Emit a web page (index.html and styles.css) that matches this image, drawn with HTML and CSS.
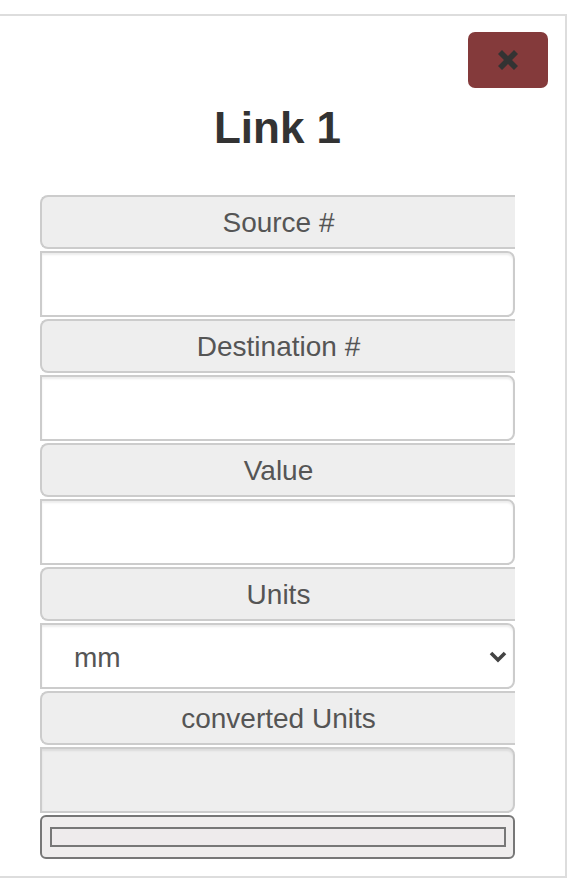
FILE: index.html
```html
<!DOCTYPE html>
<html>
<head>
<meta charset="utf-8">
<link rel="stylesheet" href="styles.css">
</head>
<body>
<div class="panel">
  <div class="panel-head">
    <button class="close-btn" type="button" aria-label="Close">
      <svg width="22" height="22" viewBox="0 0 22 22"><path d="M5 1 L11 7 L17 1 L21 5 L15 11 L21 17 L17 21 L11 15 L5 21 L1 17 L7 11 L1 5 Z" fill="#333"/></svg>
    </button>
  </div>
  <div class="content">
    <h1 class="title">Link 1</h1>
    <div class="fields">
      <div class="label">Source #</div>
      <input class="field" type="text">
      <div class="label">Destination #</div>
      <input class="field" type="text">
      <div class="label">Value</div>
      <input class="field" type="text">
      <div class="label">Units</div>
      <div class="select-wrap">
        <select class="field select"><option>mm</option></select>
        <svg class="chev" width="18" height="12" viewBox="0 0 18 12"><path d="M2 2 L9 9 L16 2" fill="none" stroke="#444" stroke-width="3.6"/></svg>
      </div>
      <div class="label">converted Units</div>
      <div class="field output"></div>
      <div class="footer-box"><div class="footer-inner"></div></div>
    </div>
  </div>
</div>
</body>
</html>
```

FILE: styles.css
```css
* { box-sizing: border-box; }
body {
  margin: 0;
  font-family: "Liberation Sans", Arial, Helvetica, sans-serif;
  background: #fff;
}
.panel {
  margin: 14px 0 0 -4px;
  width: 571px;
  border: 2px solid #ddd;
  padding-bottom: 17px;
}
.panel-head {
  display: flex;
  justify-content: flex-end;
  padding: 16px 17px 0 0;
}
.close-btn {
  width: 80px;
  height: 56px;
  border: none;
  border-radius: 7px;
  background: #843a3b;
  display: flex;
  align-items: center;
  justify-content: center;
  padding: 0;
}
.content {
  margin-left: 42px;
  width: 475px;
}
.title {
  margin: 15px 0 42px;
  font-size: 44px;
  line-height: 50px;
  font-weight: bold;
  color: #333;
  text-align: center;
}
.fields {
  display: flex;
  flex-direction: column;
  gap: 2px;
}
.label {
  height: 54px;
  border: 2px solid #ccc;
  border-right: none;
  border-radius: 8px 0 0 8px;
  background: #eee;
  color: #555;
  font-size: 28px;
  display: flex;
  align-items: center;
  justify-content: center;
  padding-top: 2px;
}
.field {
  display: block;
  width: 100%;
  height: 66px;
  margin: 0;
  border: 2px solid #ccc;
  border-radius: 0 8px 8px 0;
  background: #fff;
  box-shadow: inset 0 2px 2px rgba(0, 0, 0, 0.075);
  font-family: inherit;
  font-size: 28px;
  color: #555;
  padding: 0 24px;
  outline: none;
}
.select-wrap {
  position: relative;
}
.select {
  appearance: none;
  -webkit-appearance: none;
  padding-left: 32px;
  padding-top: 2px;
}
.chev {
  position: absolute;
  right: 8px;
  top: 28px;
}
.output {
  background: #eee;
}
.footer-box {
  height: 44px;
  border: 2px solid #777;
  border-radius: 6px;
  background: #efeded;
  padding: 10px 7px 10px 8px;
}
.footer-inner {
  height: 20px;
  border: 2px solid #777;
  background: #eeebec;
}
```
